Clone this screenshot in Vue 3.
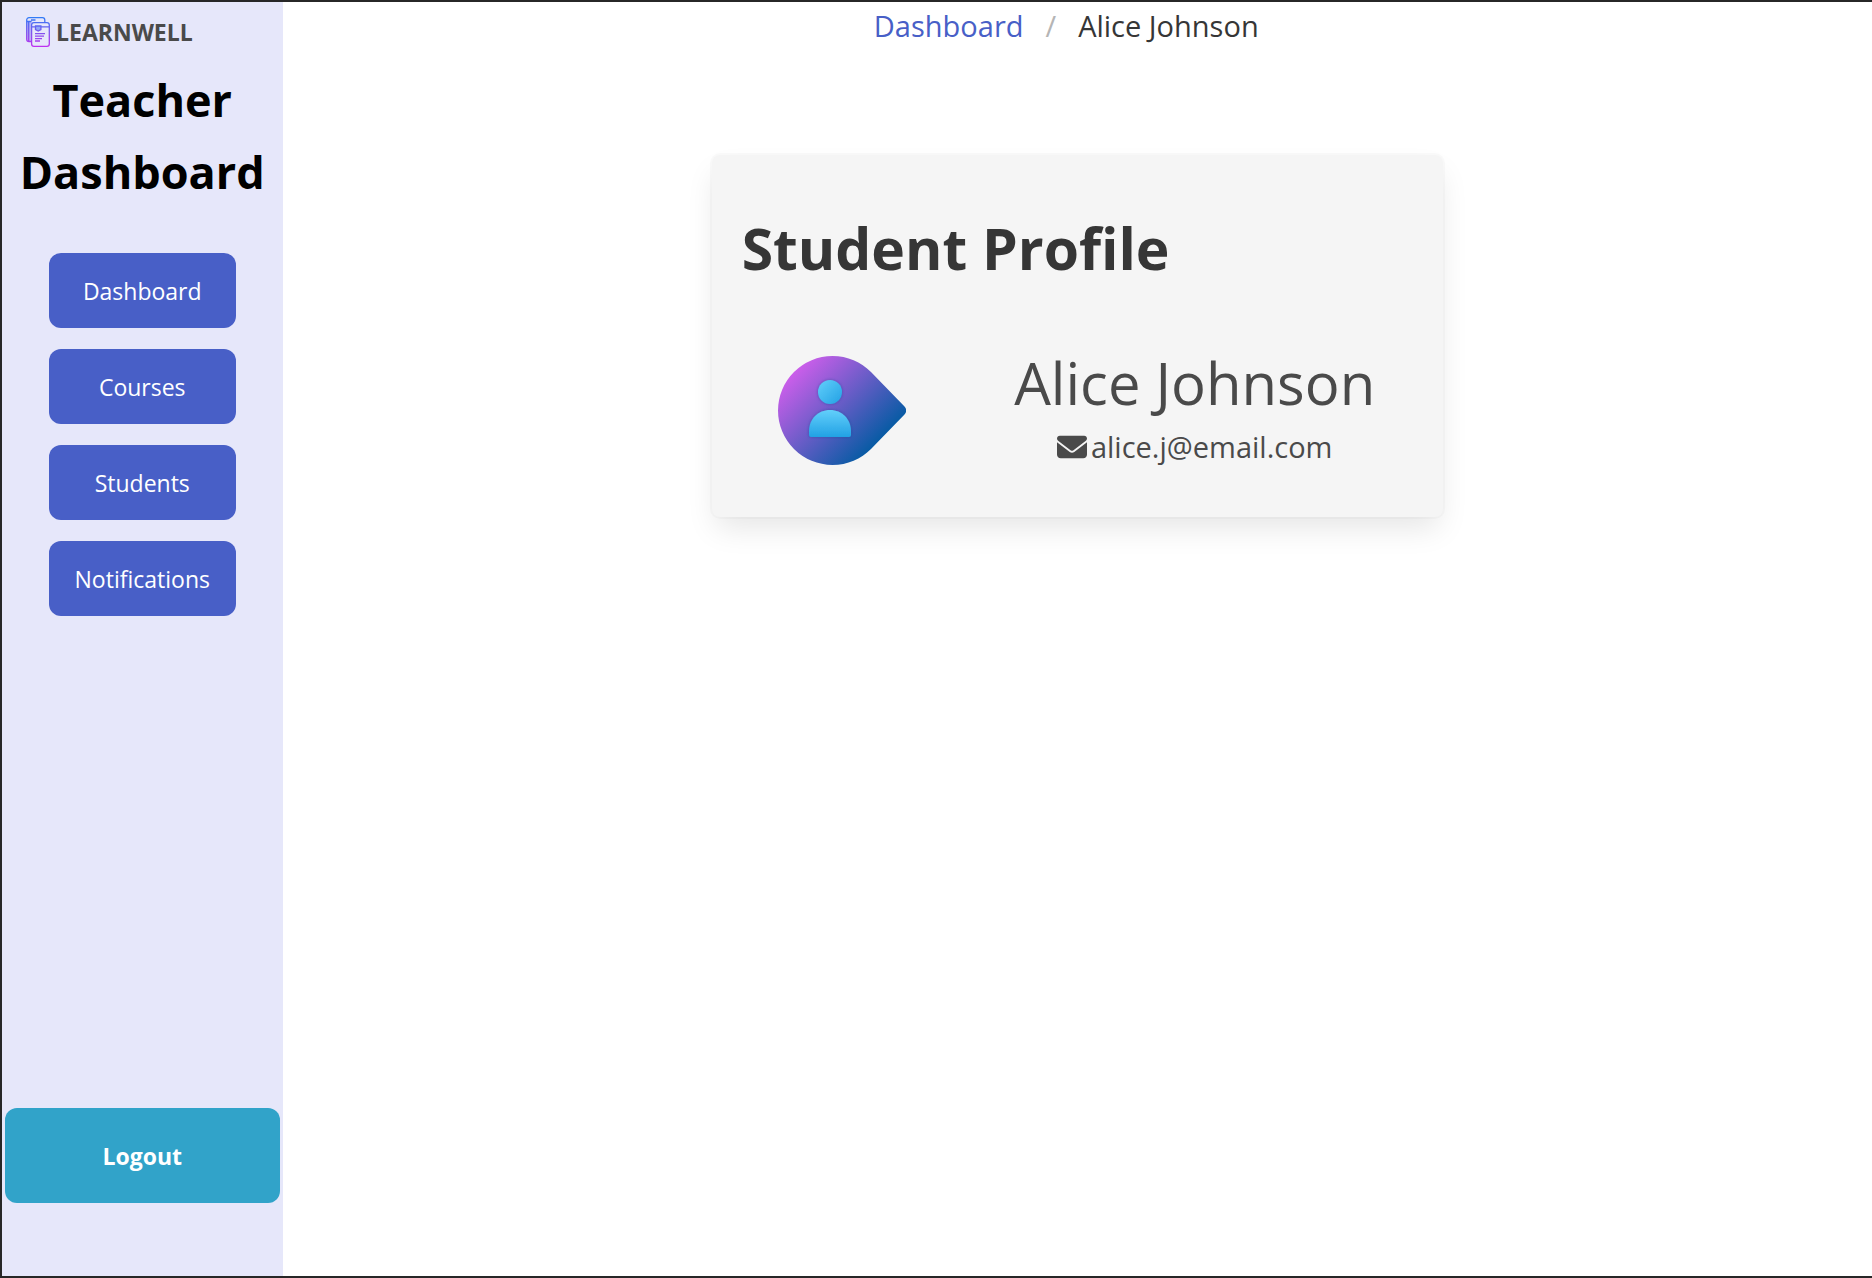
<script setup>
const links = ['Dashboard', 'Courses', 'Students', 'Notifications']
</script>

<template>
  <div class="app">
    <aside class="sidebar">
      <a class="brand" href="#">
        <svg class="brand-icon" viewBox="0 0 24 30" fill="none" aria-hidden="true">
          <defs>
            <linearGradient id="logo" x1="0" y1="0" x2="0" y2="30" gradientUnits="userSpaceOnUse">
              <stop offset="0" stop-color="#2f7cf6" />
              <stop offset="0.5" stop-color="#7d55ee" />
              <stop offset="1" stop-color="#c02ff0" />
            </linearGradient>
          </defs>
          <path d="M1 4.500h4.500V24H3Q1 24 1 22z" fill="#b9b4f5" />
          <g stroke="url(#logo)" stroke-width="1.300">
            <path d="M5.500 24.500H3A2.300 2.300 0 0 1 .7 22.200V3A2.300 2.300 0 0 1 3 .7h13.500A2.300 2.300 0 0 1 18.800 3v2.500" />
            <path d="M1 4.500h4.500M2.700 4.500v19.500M5 3h4.500" />
            <rect x="5.600" y="5.600" width="17.700" height="23.700" rx="2.300" />
            <path d="M6 9.800h3.500M15 9.800h8" />
            <path d="M9.500 9v3.500l2.700 1.500 2.700-1.500V9z" fill="#8fa6f7" />
            <path d="M9 16.700h10M9 19.200h9M9 21.700h7M9 24h5" />
          </g>
        </svg>
        <span>LEARNWELL</span>
      </a>
      <h1 class="sidebar-title">Teacher Dashboard</h1>
      <nav class="menu">
        <button v-for="link in links" :key="link" class="menu-button" type="button">{{ link }}</button>
      </nav>
      <button class="logout" type="button">Logout</button>
    </aside>

    <main class="content">
      <nav class="breadcrumb" aria-label="breadcrumbs">
        <a href="#">Dashboard</a>
        <span class="separator">/</span>
        <span class="current">Alice Johnson</span>
      </nav>

      <section class="card">
        <h2 class="card-title">Student Profile</h2>
        <div class="profile">
          <div class="picture">
            <svg class="avatar" viewBox="0 0 128 109" role="img" aria-label="Student avatar">
              <defs>
                <linearGradient id="drop" x1="16" y1="16" x2="92" y2="92" gradientUnits="userSpaceOnUse">
                  <stop offset="0" stop-color="#cb5eea" />
                  <stop offset="1" stop-color="#0a5ba5" />
                </linearGradient>
                <linearGradient id="head" x1="0" y1="0" x2="1" y2="1">
                  <stop offset="0" stop-color="#62cffb" />
                  <stop offset="1" stop-color="#22a1e4" />
                </linearGradient>
                <linearGradient id="body" x1="0" y1="0" x2="0" y2="1">
                  <stop offset="0" stop-color="#62cffb" />
                  <stop offset="1" stop-color="#22a1e4" />
                </linearGradient>
                <filter id="glow" x="-20%" y="-20%" width="140%" height="140%">
                  <feDropShadow dx="0" dy="0" stdDeviation="1.500" flood-color="#1c3f94" flood-opacity="0.600" />
                </filter>
              </defs>
              <path d="M54.500 0C69.500 0 83 6 93 16L126.500 50.500Q130 54.500 126.500 58.500L93 93C83 103 69.500 109 54.500 109A54.500 54.500 0 0 1 54.500 0Z" fill="url(#drop)" />
              <g filter="url(#glow)">
                <circle cx="52" cy="36" r="12" fill="url(#head)" />
                <path d="M31 75.500C31 63 40 54 52 54S73 63 73 75.500V79Q73 81 71 81H33Q31 81 31 79Z" fill="url(#body)" />
              </g>
            </svg>
          </div>
          <div class="details">
            <p class="name">Alice Johnson</p>
            <p class="email">
              <svg class="mail-icon" viewBox="0 0 512 512" aria-hidden="true">
                <path fill="currentColor" d="M48 64C21.500 64 0 85.500 0 112c0 15.100 7.100 29.300 19.200 38.400L236.800 313.600c11.400 8.500 27 8.500 38.400 0L492.800 150.400c12.100-9.100 19.200-23.300 19.200-38.400 0-26.500-21.500-48-48-48H48zM0 176V384c0 35.300 28.700 64 64 64H448c35.300 0 64-28.700 64-64V176L294.400 339.200c-22.800 17.100-54 17.100-76.800 0L0 176z" />
              </svg>
              <span>alice.j@email.com</span>
            </p>
          </div>
        </div>
      </section>
    </main>
  </div>
</template>

<style>
body {
  margin: 0;
}
</style>

<style scoped>
.app {
  display: flex;
  box-sizing: border-box;
  min-height: 100vh;
  border: 2px solid #272727;
  border-right: 0;
  background: #fff;
  color: #4a4a4a;
  font-family: "Open Sans", "Noto Sans", sans-serif;
}

.sidebar {
  display: flex;
  flex: 0 0 15%;
  flex-direction: column;
  box-sizing: border-box;
  padding: 12px 3px 73px;
  background: #e6e7fa;
}

.brand {
  display: flex;
  align-items: center;
  gap: 6px;
  height: 36px;
  padding-left: 21px;
  color: #4a4a4a;
  font-size: 23px;
  font-weight: 700;
  text-decoration: none;
}

.brand-icon {
  width: 24px;
  height: 30px;
}

.sidebar-title {
  margin: 14px 0 0;
  color: #000;
  font-size: 45px;
  font-weight: 700;
  line-height: 72px;
  text-align: center;
}

.menu {
  display: flex;
  flex-direction: column;
  gap: 21px;
  margin-top: 45px;
  padding: 0 44px;
}

.menu-button,
.logout {
  border: 0;
  border-radius: 12px;
  color: #fff;
  font-family: inherit;
  font-size: 23px;
}

.menu-button {
  height: 75px;
  padding: 0;
  background: #485fc7;
}

.logout {
  height: 95px;
  margin-top: auto;
  background: #31a3c9;
  font-weight: 700;
}

.content {
  display: flex;
  flex: 1;
  flex-direction: column;
  align-items: center;
}

.breadcrumb {
  display: flex;
  gap: 22px;
  margin-right: 22px;
  font-size: 29px;
  line-height: 48px;
}

.breadcrumb a {
  color: #485fc7;
  text-decoration: none;
}

.separator {
  color: #b5b5b5;
}

.current {
  color: #363636;
}

.card {
  box-sizing: border-box;
  width: 46%;
  margin-top: 105px;
  padding: 60px 30px 48px;
  border-radius: 8px;
  background: #f5f5f5;
  box-shadow: 0 15px 30px -4px rgba(10, 10, 10, 0.1), 0 0 0 2px rgba(10, 10, 10, 0.02);
}

.card-title {
  margin: 0;
  color: #363636;
  font-size: 57px;
  font-weight: 700;
  line-height: 66px;
}

.profile {
  display: flex;
  margin-top: 60px;
}

.picture {
  flex: 0 0 35%;
  box-sizing: border-box;
  padding: 15px 0 0 36px;
}

.avatar {
  display: block;
  width: 128px;
  height: 109px;
}

.details {
  flex: 1;
  text-align: center;
}

.name,
.email {
  margin: 0;
}

.name {
  font-size: 58px;
  line-height: 84px;
}

.email {
  display: flex;
  align-items: center;
  justify-content: center;
  gap: 4px;
  font-size: 29px;
  line-height: 44px;
}

.mail-icon {
  width: 30px;
  height: 30px;
}
</style>
